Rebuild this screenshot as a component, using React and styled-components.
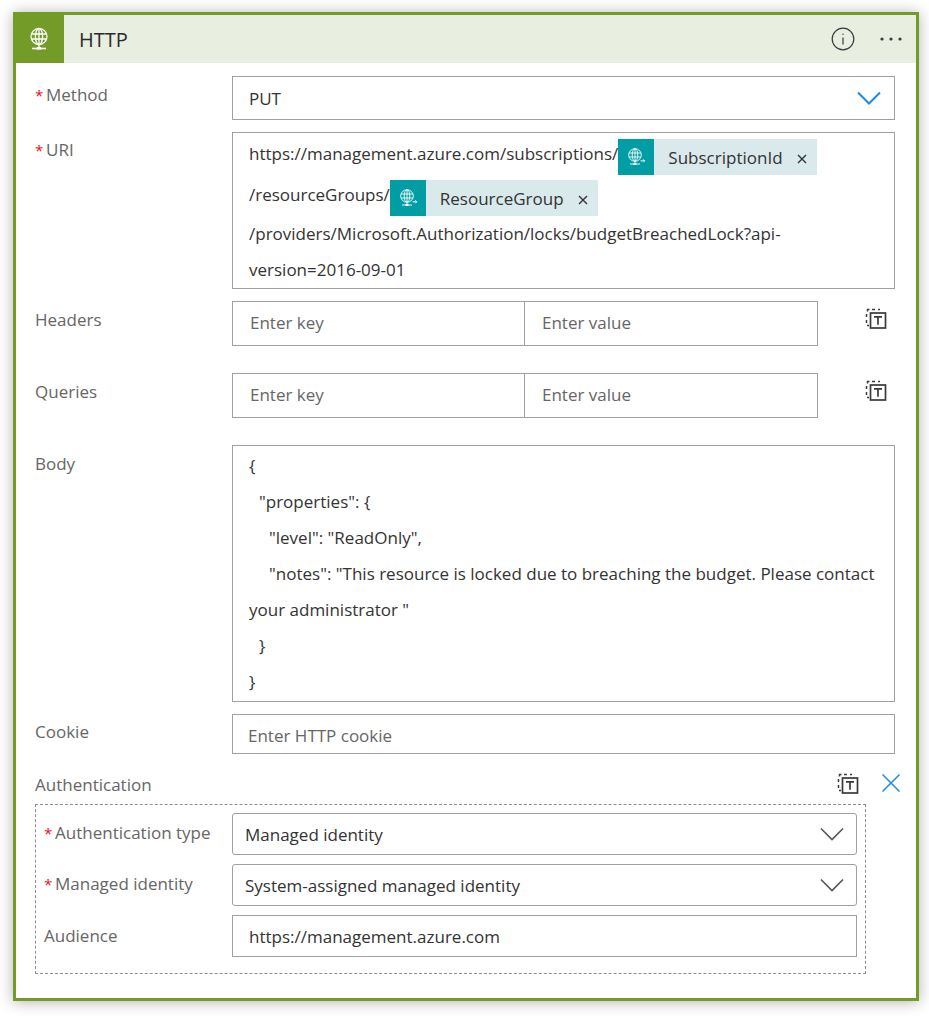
import React from "react";
import styled, { createGlobalStyle } from "styled-components";

const Global = createGlobalStyle`
  html, body { margin: 0; padding: 0; background: #fff; }
  body { font-family: "Open Sans", "Noto Sans", "Liberation Sans", sans-serif; width: 929px; height: 1016px; overflow: hidden; }
  * { box-sizing: border-box; }
`;

const Page = styled.div`
  width: 929px;
  height: 1016px;
  padding: 12px 10px 15px 13px;
`;
const Card = styled.div`
  width: 906px;
  height: 989px;
  border: 3px solid #729b28;
  background: #fff;
  box-shadow: 0 1px 14px rgba(0, 0, 0, 0.3);
`;
const Header = styled.div`
  display: flex;
  align-items: center;
  height: 48px;
  background: #e8eee0;
`;
const HeaderIcon = styled.div`
  width: 51px;
  height: 48px;
  margin-left: -3px;
  background: #729b28;
  display: flex;
  align-items: center;
  justify-content: center;
  flex: none;
`;
const Title = styled.div`
  flex: 1;
  margin-left: 15px;
  font-size: 20px;
  color: #2b2b2b;
`;
const HeaderActions = styled.div`
  display: flex;
  align-items: center;
  gap: 25px;
  padding-right: 14px;
`;
const Form = styled.div`
  padding: 13px 21px 0 19px;
`;
const Row = styled.div`
  display: grid;
  grid-template-columns: ${(p) => p.$label || 197}px 1fr;
  margin-bottom: ${(p) => p.$gap ?? 12}px;
`;
const Label = styled.div`
  font-size: 17px;
  line-height: 22px;
  color: #666;
  padding-top: ${(p) => p.$top ?? 8}px;
  white-space: nowrap;
`;
const Star = styled.span`
  display: inline-block;
  width: 11px;
  font-size: 15px;
  color: #e81123;
`;
const Field = styled.div`
  border: 1px solid #a0a0a0;
  border-radius: ${(p) => (p.$round ? 3 : 0)}px;
  height: ${(p) => p.$h || 44}px;
  font-size: 17px;
  color: #333;
  display: flex;
  align-items: center;
  justify-content: space-between;
  padding: 0 ${(p) => p.$pr ?? 13}px 0 ${(p) => p.$pl ?? 16}px;
  background: #fff;
`;
const Placeholder = styled.span`
  color: #666;
  position: relative;
  top: ${(p) => p.$shift ?? 0}px;
`;
const Multi = styled.div`
  border: 1px solid #a0a0a0;
  height: ${(p) => p.$h}px;
  padding: ${(p) => p.$pt}px 10px 0 16px;
  font-size: 17px;
  color: #333;
`;
const TokenLine = styled.div`
  display: flex;
  align-items: flex-start;
  height: 36px;
  margin-bottom: 5px;
`;
const TokenText = styled.span`
  line-height: 30px;
  white-space: nowrap;
`;
const TextLine = styled.div`
  line-height: 36px;
  height: 36px;
  white-space: nowrap;
  padding-left: ${(p) => p.$indent || 0}px;
  margin-top: ${(p) => p.$top || 0}px;
`;
const Token = styled.div`
  display: flex;
  align-items: center;
  height: 36px;
  background: #d9e9ec;
  color: #333;
`;
const TokenIcon = styled.div`
  width: 36px;
  height: 36px;
  background: #009da5;
  display: flex;
  align-items: center;
  justify-content: center;
  flex: none;
`;
const TokenName = styled.span`
  margin-left: 14px;
  white-space: nowrap;
`;
const TokenClose = styled.span`
  display: flex;
  margin: 3px 10px 0 14px;
`;
const KeyValue = styled.div`
  display: grid;
  grid-template-columns: 293px 293px 1fr;
  height: 45px;
`;
const KeyField = styled(Field)`
  height: 45px;
  padding-left: 17px;
  margin-left: ${(p) => (p.$second ? "-1px" : 0)};
  width: ${(p) => (p.$second ? "294px" : "auto")};
`;
const KVIcon = styled.div`
  display: flex;
  justify-content: flex-end;
  padding: 5px 7px 0 0;
`;
const AuthHead = styled.div`
  display: flex;
  justify-content: space-between;
  height: 50px;
  padding-top: 20px;
`;
const AuthLabel = styled.div`
  font-size: 17px;
  line-height: 22px;
  color: #666;
`;
const AuthActions = styled.div`
  display: flex;
  gap: 21px;
  height: 24px;
  margin: -3px -6px 0 0;
  align-items: center;
`;
const Dashed = styled.div`
  width: 831px;
  height: 170px;
  border: 1px dashed #8f8f8f;
  padding: 8px 8px 0 8px;
`;

const Globe = ({ size = 26 }) => (
  <svg width={size} height={size} viewBox="0 0 26 26" fill="none" stroke="#fff" strokeWidth="1.3">
    <circle cx="13" cy="10.5" r="8" />
    <ellipse cx="13" cy="10.5" rx="3.6" ry="8" />
    <path d="M5.5 8h15M5.5 13h15M13 2.5v16M13 18.5v3" />
    <path d="M6 22.5h14" strokeWidth="1.6" />
    <rect x="10.8" y="21" width="4.4" height="2.6" fill="#fff" stroke="none" />
  </svg>
);
const TokenGlobe = () => (
  <svg width="20" height="20" viewBox="0 0 20 20" fill="none" stroke="#fff" strokeWidth="0.9">
    <circle cx="9" cy="8" r="6.3" />
    <ellipse cx="9" cy="8" rx="2.8" ry="6.3" />
    <path d="M3.2 6h11.6M3.2 10h11.6M9 1.7v12.6M9 14.3v2.4M4 17h10" />
    <rect x="7.5" y="16" width="3" height="2" fill="#fff" stroke="none" />
    <path d="M14.5 13.8h4.2M17.2 12.3l1.5 1.5-1.5 1.5" />
  </svg>
);
const Info = () => (
  <svg width="24" height="24" viewBox="0 0 24 24" fill="none" stroke="#3a3a3a" strokeWidth="1.2">
    <circle cx="12" cy="12" r="10.8" />
    <path d="M12 10.5v7" />
    <circle cx="12" cy="7.3" r="0.7" fill="#3a3a3a" stroke="none" />
  </svg>
);
const Dots = () => (
  <svg width="22" height="4" viewBox="0 0 22 4" fill="#3a3a3a">
    <circle cx="2" cy="2" r="1.6" />
    <circle cx="11" cy="2" r="1.6" />
    <circle cx="20" cy="2" r="1.6" />
  </svg>
);
const Chevron = ({ color = "#1b8ae6", weight = 2 }) => (
  <svg width="24" height="14" viewBox="0 0 24 14" fill="none" stroke={color} strokeWidth={weight}>
    <path d="M1 1.5l11 11 11-11" />
  </svg>
);
const Close = () => (
  <svg width="10" height="10" viewBox="0 0 10 10" fill="none" stroke="#333" strokeWidth="1.4">
    <path d="M1 1l8 8M9 1l-8 8" />
  </svg>
);
const BlueX = () => (
  <svg width="20" height="20" viewBox="0 0 20 20" fill="none" stroke="#1b8ae6" strokeWidth="1.5">
    <path d="M1.5 1.5l17 17M18.5 1.5l-17 17" />
  </svg>
);
const TextMode = () => (
  <svg width="24" height="24" viewBox="0 0 24 24" fill="none" stroke="#3a3a3a">
    <path d="M16 3.5h-2M11 3.5H8M5.5 3.5H3.5v2M2.5 8v3M2.5 14v3M3 19.5h2" strokeWidth="1.5" />
    <rect x="6.5" y="7" width="15" height="15" strokeWidth="1.7" />
    <path d="M10 10.8h8M14 10.8v8" strokeWidth="1.7" />
  </svg>
);

const KV = () => (
  <KeyValue>
    <KeyField><Placeholder $shift={-1}>Enter key</Placeholder></KeyField>
    <KeyField $second><Placeholder $shift={-1}>Enter value</Placeholder></KeyField>
    <KVIcon><TextMode /></KVIcon>
  </KeyValue>
);

const TokenChip = ({ name }) => (
  <Token>
    <TokenIcon><TokenGlobe /></TokenIcon>
    <TokenName>{name}</TokenName>
    <TokenClose><Close /></TokenClose>
  </Token>
);

export default function App() {
  return (
    <Page>
      <Global />
      <Card>
        <Header>
          <HeaderIcon><Globe /></HeaderIcon>
          <Title>HTTP</Title>
          <HeaderActions><Info /><Dots /></HeaderActions>
        </Header>
        <Form>
          <Row>
            <Label><Star>*</Star>Method</Label>
            <Field>PUT<Chevron /></Field>
          </Row>
          <Row>
            <Label $top={7}><Star>*</Star>URI</Label>
            <Multi $h={157} $pt={6}>
              <TokenLine>
                <TokenText>https://management.azure.com/subscriptions/</TokenText>
                <TokenChip name="SubscriptionId" />
              </TokenLine>
              <TokenLine>
                <TokenText>/resourceGroups/</TokenText>
                <TokenChip name="ResourceGroup" />
              </TokenLine>
              <TextLine $top={-5}>/providers/Microsoft.Authorization/locks/budgetBreachedLock?api-</TextLine>
              <TextLine>version=2016-09-01</TextLine>
            </Multi>
          </Row>
          <Row $gap={27}>
            <Label>Headers</Label>
            <KV />
          </Row>
          <Row $gap={27}>
            <Label>Queries</Label>
            <KV />
          </Row>
          <Row>
            <Label>Body</Label>
            <Multi $h={257} $pt={2}>
              <TextLine>{"{"}</TextLine>
              <TextLine $indent={10}>{'"properties": {'}</TextLine>
              <TextLine $indent={20}>{'"level": "ReadOnly",'}</TextLine>
              <TextLine $indent={20}>{'"notes": "This resource is locked due to breaching the budget. Please contact'}</TextLine>
              <TextLine>{'your administrator "'}</TextLine>
              <TextLine $indent={10}>{"}"}</TextLine>
              <TextLine>{"}"}</TextLine>
            </Multi>
          </Row>
          <Row $gap={0}>
            <Label $top={7}>Cookie</Label>
            <Field $h={40} $pl={15}><Placeholder $shift={1}>Enter HTTP cookie</Placeholder></Field>
          </Row>
          <AuthHead>
            <AuthLabel>Authentication</AuthLabel>
            <AuthActions><TextMode /><BlueX /></AuthActions>
          </AuthHead>
          <Dashed>
            <Row $label={188} $gap={9}>
              <Label $top={9}><Star>*</Star>Authentication type</Label>
              <Field $h={42} $round $pl={12} $pr={12}>Managed identity<Chevron color="#555" weight={1.6} /></Field>
            </Row>
            <Row $label={188} $gap={9}>
              <Label $top={9}><Star>*</Star>Managed identity</Label>
              <Field $h={42} $round $pl={12} $pr={12}>System-assigned managed identity<Chevron color="#555" weight={1.6} /></Field>
            </Row>
            <Row $label={188} $gap={0}>
              <Label $top={10}>Audience</Label>
              <Field $h={42} $pl={16}>https://management.azure.com</Field>
            </Row>
          </Dashed>
        </Form>
      </Card>
    </Page>
  );
}
